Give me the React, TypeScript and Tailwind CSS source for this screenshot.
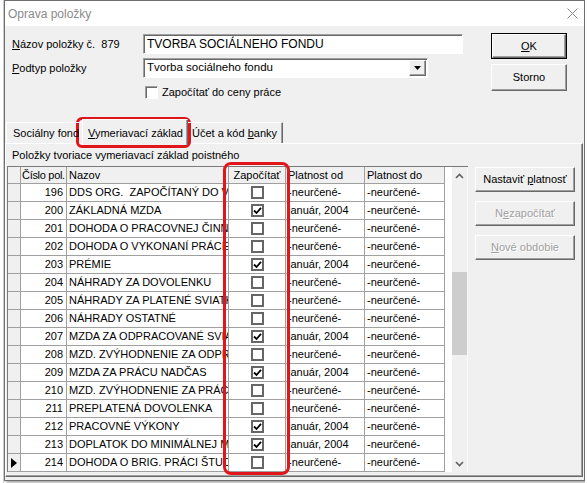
import { Fragment } from 'react';

type Row = { no: number; name: string; on: boolean };

const rows: Row[] = [
  { no: 196, name: 'DDS ORG.  ZAPOČÍTANÝ DO VŠEOBECNÝCH', on: false },
  { no: 200, name: 'ZÁKLADNÁ MZDA', on: true },
  { no: 201, name: 'DOHODA O PRACOVNEJ ČINNOSTI', on: false },
  { no: 202, name: 'DOHODA O VYKONANÍ PRÁCE', on: false },
  { no: 203, name: 'PRÉMIE', on: true },
  { no: 204, name: 'NÁHRADY ZA DOVOLENKU', on: false },
  { no: 205, name: 'NÁHRADY ZA PLATENÉ SVIATKY', on: false },
  { no: 206, name: 'NÁHRADY OSTATNÉ', on: false },
  { no: 207, name: 'MZDA ZA ODPRACOVANÉ SVIATKY', on: true },
  { no: 208, name: 'MZD. ZVÝHODNENIE ZA ODPRACOVANÉ', on: false },
  { no: 209, name: 'MZDA ZA PRÁCU NADČAS', on: true },
  { no: 210, name: 'MZD. ZVÝHODNENIE ZA PRÁCU V NOCI', on: false },
  { no: 211, name: 'PREPLATENÁ DOVOLENKA', on: false },
  { no: 212, name: 'PRACOVNÉ VÝKONY', on: true },
  { no: 213, name: 'DOPLATOK DO MINIMÁLNEJ MZDY', on: true },
  { no: 214, name: 'DOHODA O BRIG. PRÁCI ŠTUDENTOV', on: false },
];

const raised =
  'border border-t-white border-l-white border-r-[#696969] border-b-[#696969] shadow-[inset_-1px_-1px_0_#a0a0a0] bg-[#f0f0f0]';
const sunken =
  'border border-t-[#a0a0a0] border-l-[#a0a0a0] border-b-white border-r-white shadow-[inset_1px_1px_0_#696969] bg-white';
const cell = 'h-[18px] border-r border-b border-[#a0a0a0] overflow-hidden whitespace-pre leading-[17px]';

function GridCheck({ on }: { on: boolean }) {
  return (
    <div className="w-[13px] h-[13px] border-2 border-[#666] bg-white flex items-center justify-center">
      {on && (
        <svg width="9" height="9" viewBox="0 0 9 9">
          <path d="M1 4.5 L3.5 7 L8 1.8" fill="none" stroke="#000" strokeWidth="1.8" />
        </svg>
      )}
    </div>
  );
}

function Btn({ children, disabled }: { children: React.ReactNode; disabled?: boolean }) {
  return (
    <div
      className={`${raised} w-[100px] h-[25px] flex items-center justify-center ${
        disabled ? 'text-[#a0a0a0] [text-shadow:1px_1px_0_#fff]' : 'text-black'
      }`}
    >
      {children}
    </div>
  );
}

export default function App() {
  return (
    <div className="w-[587px] h-[483px] bg-white relative overflow-hidden flex font-['Liberation_Sans',Arial,sans-serif] text-[11px] text-black">
      <div className="w-[4px] h-full bg-white border-r border-[#cfcfcf]" />
      <div className="w-[581px] h-[481px] border border-[#6e6e6e] bg-[#f0f0f0] flex flex-col shadow-[2px_2px_3px_rgba(0,0,0,0.35)]">
        {/* title bar */}
        <div className="h-[25px] bg-white flex items-center justify-between pl-[3px] pr-[6px] shrink-0">
          <span className="text-[12px] text-[#8a8a8a]">Oprava položky</span>
          <svg width="11" height="11" viewBox="0 0 11 11">
            <path d="M0.5 0.5 L10.5 10.5 M10.5 0.5 L0.5 10.5" stroke="#8a8a8a" strokeWidth="1" />
          </svg>
        </div>

        {/* top form */}
        <div className="h-[93px] flex shrink-0 pt-[7px]">
          <div className="flex flex-col pl-[7px] w-[486px]">
            <div className="flex items-center h-[20px] mt-[1px]">
              <span className="w-[131px] whitespace-pre">
                <span className="underline">N</span>ázov položky č.  879
              </span>
              <div className={`${sunken} w-[320px] h-[20px] flex items-center pl-[3px] text-[12px]`}>
                TVORBA SOCIÁLNEHO FONDU
              </div>
            </div>
            <div className="flex items-center h-[20px] mt-[4px]">
              <span className="w-[131px]">
                <span className="underline">P</span>odtyp položky
              </span>
              <div className={`${sunken} w-[285px] h-[20px] flex items-center justify-between pl-[3px] pr-[1px]`}>
                <span className="text-[11.5px]">Tvorba sociálneho fondu</span>
                <div className={`${raised} w-[17px] h-[16px] flex items-center justify-center`}>
                  <svg width="7" height="4" viewBox="0 0 7 4">
                    <path d="M0 0 H7 L3.5 4 Z" fill="#000" />
                  </svg>
                </div>
              </div>
            </div>
            <div className="flex items-center h-[16px] mt-[6px] pl-[133px] gap-[4px]">
              <div className={`${sunken} w-[13px] h-[13px]`} />
              <span>Započítať do ceny práce</span>
            </div>
          </div>
          <div className="flex flex-col gap-[5px]">
            <div className="w-[76px] h-[26px] border border-black">
              <div className={`${raised} w-full h-full flex items-center justify-center`}>
                <span>
                  <span className="underline">O</span>K
                </span>
              </div>
            </div>
            <div className={`${raised} w-[76px] h-[27px] flex items-center justify-center`}>Storno</div>
          </div>
        </div>

        {/* tabs */}
        <div className="h-[24px] flex items-end shrink-0 relative z-10 pl-[1px]">
          <div className="h-[21px] w-[76px] border-t border-l border-white flex items-center pl-[6px]">
            Sociálny fond
          </div>
          <div className="h-[26px] w-[106px] -mb-[2px] border-t border-l border-white border-r border-r-[#696969] bg-[#f0f0f0] flex items-start pt-[5px] pl-[5px] shadow-[inset_-1px_0_0_#a0a0a0]">
            <span>
              <span className="underline">V</span>ymeriavací základ
            </span>
          </div>
          <div className="h-[21px] w-[95px] border-t border-white border-r border-r-[#696969] flex items-center pl-[4px] shadow-[inset_-1px_0_0_#a0a0a0]">
            <span>
              Účet a kód <span className="underline">b</span>anky
            </span>
          </div>
        </div>

        {/* tab panel */}
        <div className="h-[334px] mr-[1px] border border-t-white border-l-white border-r-[#696969] border-b-[#696969] shadow-[inset_-1px_-1px_0_#a0a0a0] flex flex-col shrink-0">
          <div className="h-[22px] pl-[6px] pt-[5px] leading-[13px]">Položky tvoriace vymeriavací základ poistného</div>
          <div className="flex">
            {/* grid */}
            <div className="ml-[1px] w-[461px] h-[306px] border-t border-l border-[#7a7a7a] bg-white flex">
              <div className="w-[437px] flex flex-col">
                <div className="flex h-[17px] bg-[#f0f0f0]">
                  <div className="w-[13px] h-[17px] border-r border-b border-[#a0a0a0]" />
                  <div className="w-[46px] h-[17px] border-r border-b border-[#a0a0a0] pl-[1px] leading-[16px] whitespace-nowrap tracking-[-0.3px]">
                    Číslo pol.
                  </div>
                  <div className="w-[162px] h-[17px] border-r border-b border-[#a0a0a0] pl-[2px] leading-[16px]">Nazov</div>
                  <div className="w-[57px] h-[17px] border-r border-b border-[#a0a0a0] text-center leading-[16px]">
                    Započítať
                  </div>
                  <div className="w-[79px] h-[17px] border-r border-b border-[#a0a0a0] pl-[2px] leading-[16px]">
                    Platnost od
                  </div>
                  <div className="w-[80px] h-[17px] border-r border-b border-[#a0a0a0] pl-[2px] leading-[16px]">
                    Platnost do
                  </div>
                </div>
                {rows.map((r, i) => (
                  <Fragment key={r.no}>
                    <div className="flex">
                      <div className={`${cell} w-[13px] bg-[#f0f0f0] flex items-center justify-center`}>
                        {i === rows.length - 1 && (
                          <svg width="6" height="10" viewBox="0 0 6 10">
                            <path d="M0 0 L6 5 L0 10 Z" fill="#000" />
                          </svg>
                        )}
                      </div>
                      <div className={`${cell} w-[46px] text-right pr-[3px]`}>{r.no}</div>
                      <div className={`${cell} w-[162px] pl-[2px]`}>{r.name}</div>
                      <div className={`${cell} w-[57px] flex items-center justify-center`}>
                        <GridCheck on={r.on} />
                      </div>
                      <div className={`${cell} w-[79px] pl-[2px]`}>{r.on ? 'január, 2004' : '-neurčené-'}</div>
                      <div className={`${cell} w-[80px] pl-[2px]`}>-neurčené-</div>
                    </div>
                  </Fragment>
                ))}
              </div>
              <div className="w-[7px] bg-white" />
              {/* scrollbar */}
              <div className="w-[16px] h-[305px] bg-[#f0f0f0] flex flex-col items-center border-r border-[#f8f8f8]">
                <div className="h-[17px] flex items-center justify-center">
                  <svg width="9" height="6" viewBox="0 0 9 6">
                    <path d="M1 5 L4.5 1.5 L8 5" fill="none" stroke="#606060" strokeWidth="1.6" />
                  </svg>
                </div>
                <div className="h-[88px]" />
                <div className="w-[15px] h-[83px] bg-[#cdcdcd]" />
                <div className="flex-1" />
                <div className="h-[17px] flex items-center justify-center">
                  <svg width="9" height="6" viewBox="0 0 9 6">
                    <path d="M1 1 L4.5 4.5 L8 1" fill="none" stroke="#606060" strokeWidth="1.6" />
                  </svg>
                </div>
              </div>
            </div>
            {/* side buttons */}
            <div className="flex flex-col gap-[9px] ml-[7px] pt-[1px]">
              <Btn>
                <span>
                  Nastaviť <span className="underline">p</span>latnosť
                </span>
              </Btn>
              <Btn disabled>
                <span>
                  N<span className="underline">e</span>započítať
                </span>
              </Btn>
              <Btn disabled>
                <span>
                  <span className="underline">N</span>ové obdobie
                </span>
              </Btn>
            </div>
          </div>
        </div>
      </div>
      <div className="flex-1 bg-white" />

      {/* red annotation marks */}
      <div className="absolute left-[76px] top-[117px] w-[115px] h-[31px] border-[3px] border-[#e0161b] rounded-[6px] pointer-events-none" />
      <div className="absolute left-[223px] top-[162px] w-[67px] h-[313px] border-[3px] border-[#e0161b] rounded-[8px] pointer-events-none" />
    </div>
  );
}
